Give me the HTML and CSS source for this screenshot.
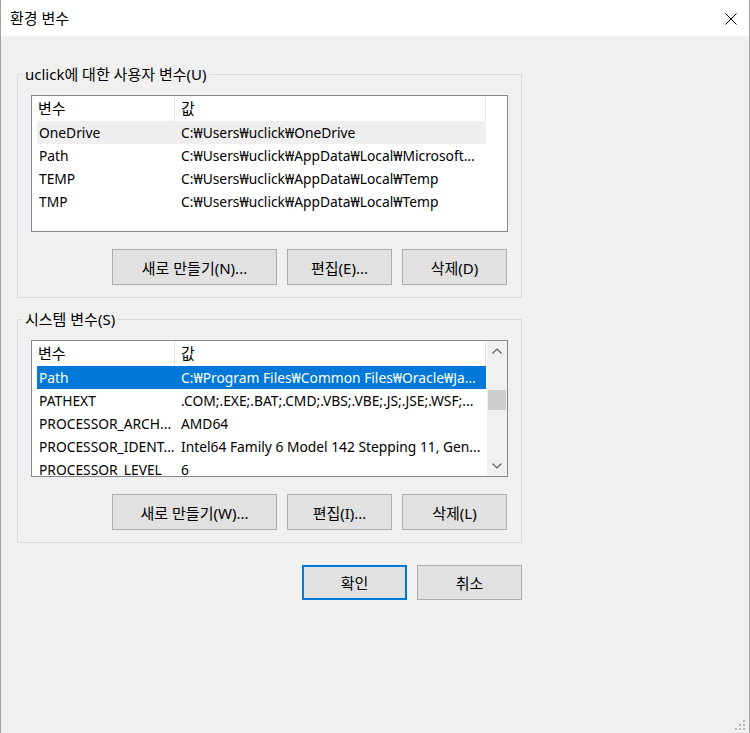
FILE: index.html
```html
<!DOCTYPE html>
<html lang="ko">
<head>
<meta charset="utf-8">
<title>환경 변수</title>
<link rel="stylesheet" href="styles.css">
</head>
<body>
<div class="window">
  <div class="titlebar">
    <span class="title">환경 변수</span>
    <span class="close">
      <svg width="12" height="12" viewBox="0 0 12 12"><path d="M0.5 0.5 L11.5 11.5 M11.5 0.5 L0.5 11.5" stroke="#000" stroke-width="1" fill="none"/></svg>
    </span>
  </div>
  <div class="content">
    <fieldset class="group">
      <legend>uclick에 대한 사용자 변수(U)</legend>
      <div class="list">
        <div class="list-main">
          <div class="header">
            <div class="hcell c1">변수</div>
            <div class="hcell c2">값</div>
          </div>
          <div class="rows">
            <div class="row inactive"><div class="cell c1">OneDrive</div><div class="cell c2">C:₩Users₩uclick₩OneDrive</div></div>
            <div class="row"><div class="cell c1">Path</div><div class="cell c2">C:₩Users₩uclick₩AppData₩Local₩Microsoft...</div></div>
            <div class="row"><div class="cell c1">TEMP</div><div class="cell c2">C:₩Users₩uclick₩AppData₩Local₩Temp</div></div>
            <div class="row"><div class="cell c1">TMP</div><div class="cell c2">C:₩Users₩uclick₩AppData₩Local₩Temp</div></div>
          </div>
        </div>
      </div>
      <div class="buttons">
        <button class="btn wide">새로 만들기(N)...</button>
        <button class="btn">편집(E)...</button>
        <button class="btn">삭제(D)</button>
      </div>
    </fieldset>

    <fieldset class="group second">
      <legend>시스템 변수(S)</legend>
      <div class="list">
        <div class="list-main">
          <div class="header">
            <div class="hcell c1">변수</div>
            <div class="hcell c2">값</div>
          </div>
          <div class="rows">
            <div class="row selected"><div class="cell c1">Path</div><div class="cell c2">C:₩Program Files₩Common Files₩Oracle₩Ja...</div></div>
            <div class="row"><div class="cell c1">PATHEXT</div><div class="cell c2">.COM;.EXE;.BAT;.CMD;.VBS;.VBE;.JS;.JSE;.WSF;...</div></div>
            <div class="row"><div class="cell c1">PROCESSOR_ARCH...</div><div class="cell c2">AMD64</div></div>
            <div class="row"><div class="cell c1">PROCESSOR_IDENT...</div><div class="cell c2">Intel64 Family 6 Model 142 Stepping 11, Gen...</div></div>
            <div class="row"><div class="cell c1">PROCESSOR_LEVEL</div><div class="cell c2">6</div></div>
          </div>
        </div>
        <div class="scrollbar">
          <div class="sb-btn">
            <svg width="10" height="6" viewBox="0 0 10 6"><polyline points="0.5,5.5 5,1 9.5,5.5" fill="none" stroke="#606060" stroke-width="1.2"/></svg>
          </div>
          <div class="sb-track"><div class="sb-thumb"></div></div>
          <div class="sb-btn">
            <svg width="10" height="6" viewBox="0 0 10 6"><polyline points="0.5,0.5 5,5 9.5,0.5" fill="none" stroke="#606060" stroke-width="1.2"/></svg>
          </div>
        </div>
      </div>
      <div class="buttons">
        <button class="btn wide">새로 만들기(W)...</button>
        <button class="btn">편집(I)...</button>
        <button class="btn">삭제(L)</button>
      </div>
    </fieldset>

    <div class="dialog-buttons">
      <button class="btn default">확인</button>
      <button class="btn">취소</button>
    </div>
  </div>
  <div class="grip">
    <svg width="12" height="12" viewBox="0 0 12 12" fill="#b5b5b5">
      <rect x="8" y="0" width="2" height="2"/>
      <rect x="4" y="4" width="2" height="2"/><rect x="8" y="4" width="2" height="2"/>
      <rect x="0" y="8" width="2" height="2"/><rect x="4" y="8" width="2" height="2"/><rect x="8" y="8" width="2" height="2"/>
    </svg>
  </div>
</div>
</body>
</html>
```

FILE: styles.css
```css
html, body {
  margin: 0;
  padding: 0;
}
body {
  width: 750px;
  height: 733px;
  overflow: hidden;
  font-family: "Noto Sans", "Noto Sans CJK KR", sans-serif;
  font-size: 14px;
  color: #000;
}
.window {
  position: relative;
  box-sizing: border-box;
  width: 750px;
  height: 733px;
  background: #f0f0f0;
  border-left: 1px solid #a0a0a0;
  border-right: 1px solid #a0a0a0;
}
.titlebar {
  height: 36px;
  background: #fff;
  display: flex;
  align-items: center;
  justify-content: space-between;
  padding: 0 12px 0 9px;
}
.title {
  font-size: 15px;
  line-height: 20px;
  margin-top: -1px;
}
.close {
  display: flex;
  width: 12px;
  height: 12px;
  margin-top: 2px;
}
.content {
  padding: 28px 0 0 16px;
  width: 505px;
}
.group {
  box-sizing: border-box;
  width: 505px;
  min-width: 0;
  margin: 0;
  border: 1px solid #dcdcdc;
  padding: 11px 13px 12px 13px;
}
.group.second {
  margin-top: 11px;
}
.group legend {
  padding: 0 2px;
  margin-left: -8px;
  line-height: 20px;
  height: 20px;
  font-size: 15px;
}
.list {
  box-sizing: border-box;
  height: 137px;
  border: 1px solid #828790;
  background: #fff;
  display: flex;
  overflow: hidden;
}
.list-main {
  width: 454px;
  overflow: hidden;
}
.header {
  display: flex;
  height: 25px;
}
.hcell {
  box-sizing: border-box;
  line-height: 25px;
  border-right: 1px solid #e5e5e5;
  padding-left: 6px;
  white-space: nowrap;
  font-size: 15px;
}
.header .c1 {
  width: 143px;
}
.header .c2 {
  width: 311px;
}
.rows {
  margin-left: 5px;
}
.row {
  display: flex;
  height: 23px;
  line-height: 23px;
  width: 449px;
  font-size: 13.8px;
}
.row.inactive {
  background: #efefef;
}
.row.selected {
  background: #0078d7;
  color: #fff;
}
.cell {
  box-sizing: border-box;
  white-space: nowrap;
  overflow: hidden;
}
.row .c1 {
  width: 138px;
  padding-left: 2px;
}
.row .c2 {
  width: 311px;
  padding-left: 6px;
}
.scrollbar {
  width: 20px;
  margin-left: 1px;
  background: #f0f0f0;
  display: flex;
  flex-direction: column;
}
.sb-btn {
  height: 20px;
  display: flex;
  align-items: center;
  justify-content: center;
}
.sb-track {
  flex: 1;
  padding: 29px 1px 0 1px;
}
.sb-thumb {
  height: 20px;
  background: #cdcdcd;
}
.buttons {
  display: flex;
  justify-content: flex-end;
  gap: 10px;
  margin-top: 17px;
  padding-right: 1px;
}
.btn {
  box-sizing: border-box;
  width: 105px;
  height: 36px;
  background: #e1e1e1;
  border: 1px solid #adadad;
  font-family: inherit;
  font-size: 15px;
  color: #000;
  padding: 0;
  margin: 0;
}
.btn.wide {
  width: 165px;
}
.dialog-buttons {
  display: flex;
  justify-content: flex-end;
  gap: 10px;
  margin-top: 22px;
}
.dialog-buttons .btn {
  height: 35px;
}
.btn.default {
  border: 2px solid #0078d7;
}
.grip {
  position: absolute;
  right: 2px;
  bottom: 1px;
  width: 12px;
  height: 12px;
  display: flex;
}
```
